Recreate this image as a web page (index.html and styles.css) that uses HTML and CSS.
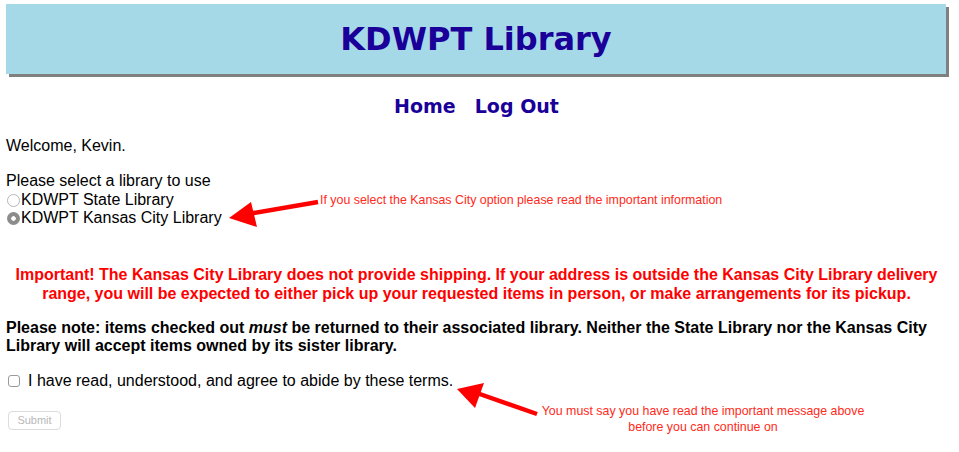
FILE: index.html
```html
<!DOCTYPE html>
<html>
<head>
<meta charset="utf-8">
<title>KDWPT Library</title>
<link rel="stylesheet" href="styles.css">
</head>
<body>
<header class="banner"><h1 class="title">KDWPT Library</h1></header>
<nav class="nav"><a href="#">Home</a><a href="#">Log Out</a></nav>
<main class="content">
  <p class="welcome">Welcome, Kevin.</p>
  <form class="form">
    <div class="select-label">Please select a library to use</div>
    <label class="radio-row"><input type="radio" name="lib" class="radio">KDWPT State Library</label>
    <label class="radio-row"><input type="radio" name="lib" class="radio" checked>KDWPT Kansas City Library</label>
    <p class="important">Important! The Kansas City Library does not provide shipping. If your address is outside the Kansas City Library delivery range, you will be expected to either pick up your requested items in person, or make arrangements for its pickup.</p>
    <p class="note">Please note: items checked out <em>must</em> be returned to their associated library. Neither the State Library nor the Kansas City Library will accept items owned by its sister library.</p>
    <label class="check-row"><input type="checkbox" class="check"> I have read, understood, and agree to abide by these terms.</label>
    <button type="button" class="submit" disabled>Submit</button>
  </form>
</main>
<svg class="arrow" width="959" height="452" viewBox="0 0 959 452">
  <line x1="318" y1="202" x2="248" y2="214" stroke="#ff0000" stroke-width="4.5"/>
  <polygon points="229,218 251,202 257,227" fill="#ff0000"/>
  <line x1="537" y1="414" x2="474" y2="392" stroke="#ff0000" stroke-width="4.5"/>
  <polygon points="457,389 484,383 475,408" fill="#ff0000"/>
</svg>
<div class="annot annot-one">If you select the Kansas City option please read the important information</div>
<div class="annot annot-two">You must say you have read the important message above<br>before you can continue on</div>
</body>
</html>
```
FILE: styles.css
```css
html, body {
  margin: 0;
  padding: 0;
  background: #ffffff;
}
body {
  font-family: "Liberation Sans", Arial, sans-serif;
  font-size: 16px;
  color: #000;
  position: relative;
  width: 959px;
  height: 452px;
  overflow: hidden;
}
.banner {
  margin: 4px 13px 0 6px;
  height: 70px;
  background: #a5d9e8;
  box-shadow: 3px 3px 0 #808080;
  display: flex;
  align-items: center;
  justify-content: center;
}
.title {
  margin: 0;
  font-family: "DejaVu Sans", Verdana, sans-serif;
  font-weight: bold;
  font-size: 32px;
  color: #1a0099;
}
.nav {
  display: flex;
  justify-content: center;
  gap: 19px;
  margin: 19px 6px 0 0;
  height: 26px;
  align-items: center;
}
.nav a {
  font-family: "DejaVu Sans", Verdana, sans-serif;
  font-weight: bold;
  font-size: 19px;
  color: #1a0099;
  text-decoration: none;
}
.content {
  padding: 0 12px 0 6px;
}
.welcome {
  margin: 18px 0 0;
  line-height: 18px;
}
.form {
  margin-top: 17px;
}
.select-label, .radio-row {
  display: flex;
  align-items: center;
  line-height: 18.5px;
}
.radio {
  appearance: none;
  -webkit-appearance: none;
  width: 13px;
  height: 13px;
  margin: 1px 1px 0 1px;
  border: 1px solid #b5b5b5;
  border-radius: 50%;
  background: #fff;
  box-sizing: border-box;
}
.radio:checked {
  border: none;
  background: radial-gradient(circle, #ffffff 0 2px, #8c8c8c 2.5px);
}
.important {
  margin: 37px 0 0;
  text-align: center;
  color: #ff0000;
  font-weight: bold;
  font-size: 16px;
  line-height: 19px;
}
.note {
  margin: 16px 0 0;
  font-weight: bold;
  font-size: 16px;
  line-height: 18px;
}
.check-row {
  display: flex;
  align-items: center;
  margin-top: 17px;
  line-height: 18px;
}
.check {
  appearance: none;
  -webkit-appearance: none;
  width: 12px;
  height: 12px;
  margin: 1px 8px 0 2px;
  border: 1px solid #9a9a9a;
  border-radius: 3px;
  background: #fff;
  box-sizing: border-box;
}
.submit {
  display: block;
  margin: 21px 0 0 2px;
  width: 53px;
  height: 19px;
  padding: 0;
  background: #fff;
  border: 1px solid #dcdcdc;
  border-radius: 4px;
  color: #b8b8b8;
  font-family: "Liberation Sans", Arial, sans-serif;
  font-size: 11px;
}
.arrow {
  position: absolute;
  left: 0;
  top: 0;
  pointer-events: none;
}
.annot {
  position: absolute;
  font-family: "Liberation Sans", Helvetica, Arial, sans-serif;
  font-size: 12.4px;
  line-height: 16px;
  color: #ff2a1a;
}
.annot-one {
  left: 320px;
  top: 192px;
}
.annot-two {
  left: 523px;
  top: 403px;
  width: 360px;
  text-align: center;
}
```
